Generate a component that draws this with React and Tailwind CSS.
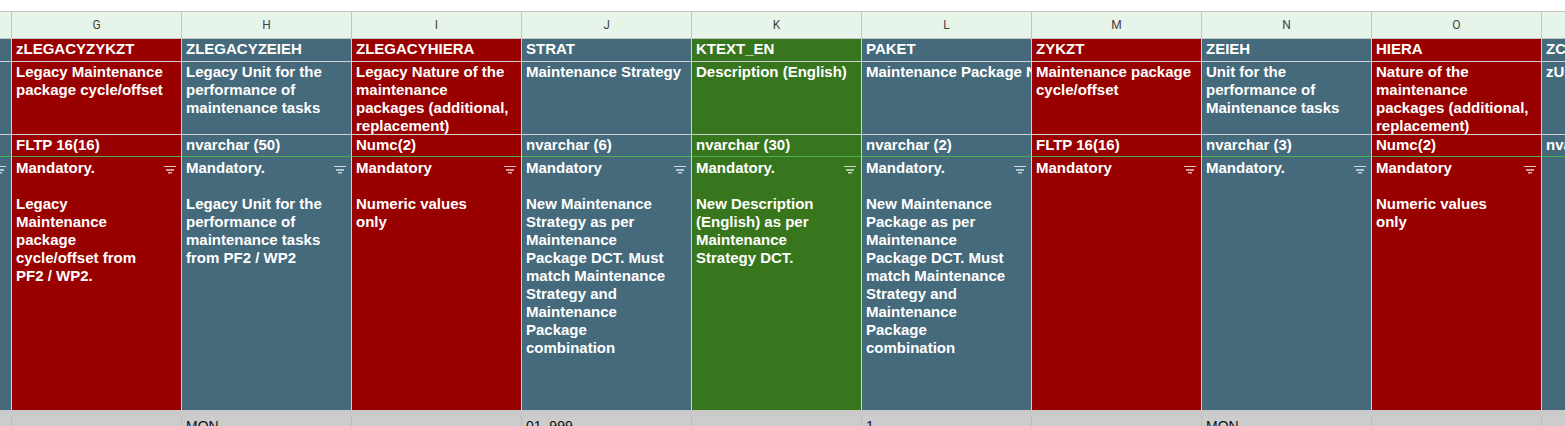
import React from 'react';

const BG = {
  red: 'bg-[#990000]',
  blue: 'bg-[#456a7c]',
  green: 'bg-[#38761d]',
};

const columns = [
  { key: 'F', color: 'blue', r1: '', r2: [], r3: '', r4: [], filter: true, bottom: '' },
  {
    key: 'G', color: 'red', r1: 'zLEGACYZYKZT',
    r2: ['Legacy Maintenance', 'package cycle/offset'],
    r3: 'FLTP 16(16)',
    r4: ['Mandatory.', '', 'Legacy', 'Maintenance', 'package', 'cycle/offset from', 'PF2 / WP2.'],
    filter: true, bottom: '',
  },
  {
    key: 'H', color: 'blue', r1: 'ZLEGACYZEIEH',
    r2: ['Legacy Unit for the', 'performance of', 'maintenance tasks'],
    r3: 'nvarchar (50)',
    r4: ['Mandatory.', '', 'Legacy Unit for the', 'performance of', 'maintenance tasks', 'from PF2 / WP2'],
    filter: true, bottom: 'MON',
  },
  {
    key: 'I', color: 'red', r1: 'ZLEGACYHIERA',
    r2: ['Legacy Nature of the', 'maintenance', 'packages (additional,', 'replacement)'],
    r3: 'Numc(2)',
    r4: ['Mandatory', '', 'Numeric values', 'only'],
    filter: true, bottom: '',
  },
  {
    key: 'J', color: 'blue', r1: 'STRAT',
    r2: ['Maintenance Strategy'],
    r3: 'nvarchar (6)',
    r4: ['Mandatory', '', 'New Maintenance', 'Strategy as per', 'Maintenance', 'Package DCT. Must', 'match Maintenance', 'Strategy and', 'Maintenance', 'Package', 'combination'],
    filter: true, bottom: '01..999',
  },
  {
    key: 'K', color: 'green', r1: 'KTEXT_EN',
    r2: ['Description (English)'],
    r3: 'nvarchar (30)',
    r4: ['Mandatory.', '', 'New Description', '(English) as per', 'Maintenance', 'Strategy DCT.'],
    filter: true, bottom: '',
  },
  {
    key: 'L', color: 'blue', r1: 'PAKET',
    r2: ['Maintenance Package Number'], clip: true,
    r3: 'nvarchar (2)',
    r4: ['Mandatory.', '', 'New Maintenance', 'Package as per', 'Maintenance', 'Package DCT. Must', 'match Maintenance', 'Strategy and', 'Maintenance', 'Package', 'combination'],
    filter: true, bottom: '1',
  },
  {
    key: 'M', color: 'red', r1: 'ZYKZT',
    r2: ['Maintenance package', 'cycle/offset'],
    r3: 'FLTP 16(16)',
    r4: ['Mandatory'],
    filter: true, bottom: '',
  },
  {
    key: 'N', color: 'blue', r1: 'ZEIEH',
    r2: ['Unit for the', 'performance of', 'Maintenance tasks'],
    r3: 'nvarchar (3)',
    r4: ['Mandatory.'],
    filter: true, bottom: 'MON',
  },
  {
    key: 'O', color: 'red', r1: 'HIERA',
    r2: ['Nature of the', 'maintenance', 'packages (additional,', 'replacement)'],
    r3: 'Numc(2)',
    r4: ['Mandatory', '', 'Numeric values', 'only'],
    filter: true, bottom: '',
  },
  {
    key: 'P', color: 'blue', r1: 'ZCUSTAT',
    r2: ['zUser Status'],
    r3: 'nvarchar (8)',
    r4: [],
    filter: false, bottom: '',
  },
];

// Sheets-style filter button: three stacked bars
const FilterIcon = () => (
  <svg width="12" height="8" viewBox="0 0 12 8" className="absolute right-[5px] top-[9px]">
    <rect x="0" y="0" width="12" height="1" fill="#ffffff" opacity="0.75" />
    <rect x="2" y="3" width="8" height="2" fill="#ffffff" opacity="0.6" />
    <rect x="4" y="6" width="4" height="1.5" fill="#ffffff" opacity="0.7" />
  </svg>
);

const Lines = ({ lines }) => (
  <div>
    {lines.map((l, i) => (
      <div key={i} className="h-[18px] whitespace-nowrap">{l || '\u00a0'}</div>
    ))}
  </div>
);

const Column = ({ col }) => {
  const bg = BG[col.color];
  return (
    <div className="flex w-[170px] shrink-0 flex-col">
      <div className="flex h-[28px] items-center justify-center border-y border-r border-[#c4c4c4] bg-[#e6f4ea] font-['Roboto',sans-serif] text-[12px] font-normal text-[#444]">
        {col.key}
      </div>
      <div className={`h-[23px] overflow-hidden border-b border-r border-[#cfd3d6] ${bg} px-[4px] pt-[1px] leading-[18px] whitespace-nowrap`}>
        {col.r1}
      </div>
      <div className={`h-[73px] overflow-hidden border-b border-r border-[#cfd3d6] ${bg} px-[4px] pt-[1px] leading-[18px]`}>
        {col.clip ? <div className="whitespace-nowrap">{col.r2[0]}</div> : <Lines lines={col.r2} />}
      </div>
      <div className={`h-[22px] overflow-hidden border-b border-b-[#4caf50] border-r border-r-[#cfd3d6] ${bg} px-[4px] pt-[1px] leading-[18px] whitespace-nowrap`}>
        {col.r3}
      </div>
      <div className={`relative h-[253px] overflow-hidden border-r border-[#cfd3d6] ${bg} px-[4px] pt-[2px] leading-[18px]`}>
        <Lines lines={col.r4} />
        {col.filter && <FilterIcon />}
      </div>
    </div>
  );
};

export default function App() {
  return (
    <div className="h-[426px] w-[1565px] overflow-hidden bg-white font-['Liberation_Sans',Arial,sans-serif] text-[15px] font-bold text-white">
      <div className="flex pt-[11px] ml-[-158px]">
        {columns.map((c) => (
          <Column key={c.key} col={c} />
        ))}
      </div>
      <div className="h-[6px] bg-[#c9c9c9]" />
      <div className="flex ml-[-158px]">
        {columns.map((c) => (
          <div
            key={c.key}
            className="h-[30px] w-[170px] shrink-0 border-r border-[#bababa] bg-[#cccccc] px-[4px] pt-[1px] text-[14px] font-normal leading-[18px] text-[#111]"
          >
            {c.bottom}
          </div>
        ))}
      </div>
    </div>
  );
}
